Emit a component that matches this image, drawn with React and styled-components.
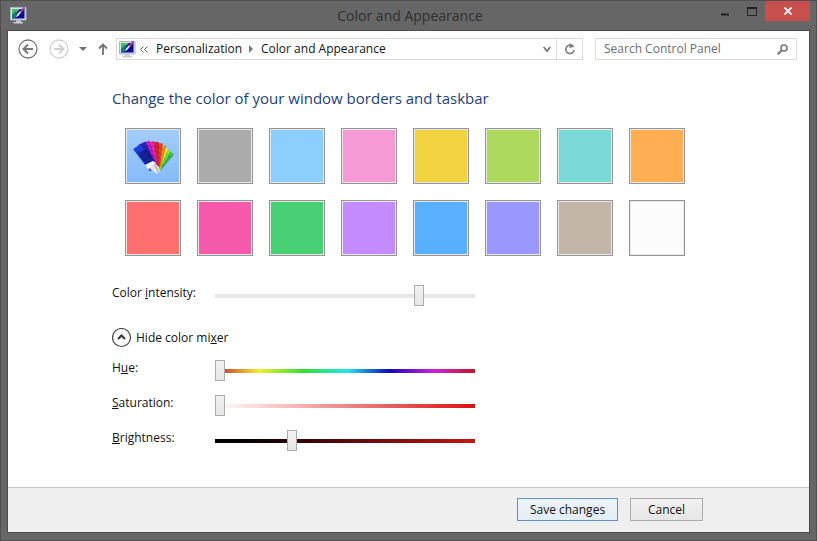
import { useState } from 'react';
import styled, { createGlobalStyle } from 'styled-components';

const SWATCHES = [
  { name: 'Automatic', color: 'linear-gradient(#a4cdfb, #84bbfb)', auto: true },
  { name: 'Gray', color: '#ababab' },
  { name: 'Sky', color: '#8ccfff' },
  { name: 'Pink', color: '#f59ad5' },
  { name: 'Yellow', color: '#f1d240' },
  { name: 'Lime', color: '#add95f' },
  { name: 'Aqua', color: '#7ad8d7' },
  { name: 'Orange', color: '#ffae51' },
  { name: 'Coral', color: '#ff6f6f' },
  { name: 'Magenta', color: '#f559a9' },
  { name: 'Green', color: '#48d075' },
  { name: 'Violet', color: '#c48aff' },
  { name: 'Blue', color: '#58b0ff' },
  { name: 'Lavender', color: '#9a98ff' },
  { name: 'Taupe', color: '#c3b5a8' },
  { name: 'White', color: '#fcfcfc' },
];

const BLADES = [
  { angle: 39, color: '#3cc43c', length: 25, width: 5 },
  { angle: 31, color: '#7fe04a', length: 25, width: 5 },
  { angle: 23, color: '#f5ec2c', length: 26, width: 5 },
  { angle: 15, color: '#f0941d', length: 28, width: 6 },
  { angle: 7, color: '#f0402a', length: 29, width: 6 },
  { angle: -1, color: '#e01d40', length: 30, width: 6 },
  { angle: -10, color: '#ee28a8', length: 31, width: 6 },
  { angle: -18, color: '#b022d8', length: 32, width: 6 },
  { angle: -26, color: '#2a22b8', length: 32, width: 7 },
  { angle: -37, color: '#1c40e0', length: 32, width: 9 },
];

const HUES =
  'linear-gradient(to right, #c8202a, #f0f030 17%, #30e030 34%, #20e8e8 51%, #1008c0 67%, #d020d8 84%, #c81428)';

const MonitorIcon = () => (
  <svg width="17" height="17" viewBox="0 0 17 17" aria-hidden="true">
    <path d="M0.5 0.5h15.500v12.500H0.500z" fill="#d9e0ec" stroke="#aab4c6" />
    <path d="M2 2h12.500v9.500H2z" fill="#0c0c8c" />
    <path d="M2 2h8L2 9.500z" fill="#42c462" />
    <path d="M2 11.500V8l4-4 1 3-2 4.500z" fill="#157c74" />
    <path d="M6 9.500l2-3 1.500 1.200L6.500 10z" fill="#fff" />
    <path d="M8.500 7L14.500 0.500" stroke="#a8478c" strokeWidth="2" />
    <path d="M8 7.500L10.500 5" stroke="#e8f2ff" strokeWidth="1.500" />
    <path d="M6 13.500h5V15h2v1.500H3.500V15H6z" fill="#c8cdd8" />
  </svg>
);

const FanIcon = () => (
  <svg width="42" height="38" viewBox="0 0 42 38" aria-hidden="true">
    {BLADES.map(({ angle, color, length, width }) => (
      <g key={angle} transform={`translate(24 35) rotate(${angle})`}>
        <rect x={-width / 2} y={-length} width={width} height={length - 4} fill={color} />
        <path
          d={`M${-width / 2} ${5 - length}h${width}M${-width / 2} ${10 - length}h${width}M${-width / 2} ${15 - length}h${width}`}
          stroke="#000"
          strokeOpacity="0.2"
        />
        <path
          d={`M${width / 2} ${-length}V-6`}
          stroke="#000"
          strokeOpacity="0.15"
        />
      </g>
    ))}
    <path d="M6 16l8-4 8 12-8 4z" fill="#080850" opacity="0.5" />
    <path d="M13 28l8-4 3 2-6 4-2 2z" fill="#fff" />
    <path d="M17 30l6-4 4 4 1 4-3 3-6-4z" fill="#dadada" />
    <path d="M20 29l5 7M23 27l3 8" stroke="#aaa" />
    <path d="M16 32l4-3 5 7" stroke="#fff" fill="none" />
  </svg>
);

const CircleArrow = ({ flip, color }) => (
  <svg width="20" height="20" viewBox="0 0 20 20" aria-hidden="true">
    <circle cx="10" cy="10" r="9" fill="none" stroke={color} strokeWidth="1.300" />
    <path
      d="M15 10H6M10 5.500L5.500 10l4.500 4.500"
      transform={flip ? 'rotate(180 10 10)' : undefined}
      fill="none"
      stroke={color}
      strokeWidth="2"
    />
  </svg>
);

const Slider = ({ label, id, initial, track }) => {
  const [value, setValue] = useState(initial);
  return (
    <SliderRow>
      <SliderLabel htmlFor={id}>{label}</SliderLabel>
      <Range
        id={id}
        type="range"
        min="0"
        max="255"
        value={value}
        $track={track}
        onChange={(e) => setValue(Number(e.target.value))}
      />
    </SliderRow>
  );
};

const App = () => {
  const [open, setOpen] = useState(true);

  return (
    <Frame>
      <GlobalStyle />
      <TitleBar>
        <MonitorIcon />
        <WindowTitle>Color and Appearance</WindowTitle>
        <WindowControls>
          <ControlButton aria-label="Minimize">
            <svg width="9" height="10" viewBox="0 0 9 10">
              <path d="M1 8.500h8" stroke="#222" strokeWidth="2" />
            </svg>
          </ControlButton>
          <ControlButton aria-label="Maximize">
            <svg width="10" height="9" viewBox="0 0 10 9">
              <path d="M0.500 1v7.500h9V1" fill="none" stroke="#222" />
              <path d="M0 1h10" stroke="#222" strokeWidth="2" />
            </svg>
          </ControlButton>
          <CloseButton aria-label="Close">
            <svg width="8" height="8" viewBox="0 0 8 8">
              <path d="M0.500 0.500l7 7M7.500 0.500l-7 7" stroke="#fff" strokeWidth="1.700" />
            </svg>
          </CloseButton>
        </WindowControls>
      </TitleBar>

      <Panel>
        <NavBar>
          <NavButtons>
            <IconButton aria-label="Back">
              <CircleArrow color="#777" />
            </IconButton>
            <IconButton aria-label="Forward">
              <CircleArrow flip color="#d0d0d0" />
            </IconButton>
            <IconButton aria-label="Recent pages">
              <svg width="8" height="4" viewBox="0 0 8 4">
                <path d="M0 0h8L4 4z" fill="#707070" />
              </svg>
            </IconButton>
            <IconButton aria-label="Up">
              <svg width="10" height="12" viewBox="0 0 10 12">
                <path d="M5 12V1.500M1 5.500l4-4 4 4" fill="none" stroke="#707070" strokeWidth="1.800" />
              </svg>
            </IconButton>
          </NavButtons>

          <AddressBar>
            <MonitorIcon />
            <svg width="8" height="7" viewBox="0 0 8 7" aria-hidden="true">
              <path d="M3.500 0.500l-3 3 3 3M7.500 0.500l-3 3 3 3" fill="none" stroke="#555" />
            </svg>
            <Crumb href="#personalization">Personalization</Crumb>
            <svg width="4" height="8" viewBox="0 0 4 8" aria-hidden="true">
              <path d="M0 0l4 4-4 4z" fill="#777" />
            </svg>
            <Crumb href="#color">Color and Appearance</Crumb>
            <DropButton aria-label="Previous locations">
              <svg width="8" height="7" viewBox="0 0 8 7">
                <path d="M0.700 1L4 5l3.300-4" fill="none" stroke="#777" strokeWidth="1.800" />
              </svg>
            </DropButton>
            <RefreshButton aria-label="Refresh">
              <svg width="12" height="12" viewBox="0 0 12 12">
                <path d="M9.500 4A4.200 4.200 0 1 0 10.200 7" fill="none" stroke="#808080" strokeWidth="1.700" />
                <path d="M5.500 0v5.500L10 3z" fill="#808080" />
              </svg>
            </RefreshButton>
          </AddressBar>

          <SearchBox>
            <SearchInput type="search" aria-label="Search Control Panel" placeholder="Search Control Panel" />
            <svg width="11" height="11" viewBox="0 0 11 11" aria-hidden="true">
              <circle cx="7" cy="4" r="3" fill="none" stroke="#777" strokeWidth="1.600" />
              <path d="M5 6L0.700 10.300" stroke="#777" strokeWidth="2.200" />
            </svg>
          </SearchBox>
        </NavBar>

        <Content>
          <Heading>Change the color of your window borders and taskbar</Heading>
          <SwatchGrid>
            {SWATCHES.map(({ name, color, auto }) => (
              <Swatch key={name} aria-label={name} $color={color}>
                {auto && <FanIcon />}
              </Swatch>
            ))}
          </SwatchGrid>

          <Slider id="intensity" initial={203} track="#e7e7e7" label={<>Color <u>i</u>ntensity:</>} />

          <MixerToggle aria-expanded={open} onClick={() => setOpen(!open)}>
            <svg width="20" height="20" viewBox="0 0 20 20" aria-hidden="true">
              <circle cx="9.500" cy="9.500" r="9" fill="none" stroke="#444" strokeWidth="1.200" />
              <path
                d="M6 11l3.500-3.500L13 11"
                transform={open ? undefined : 'rotate(180 9.500 9.500)'}
                fill="none"
                stroke="#333"
                strokeWidth="2"
              />
            </svg>
            <span>{open ? 'Hide' : 'Show'} color mi<u>x</u>er</span>
          </MixerToggle>

          {open && (
            <Mixer>
              <Slider id="hue" initial={0} track={HUES} label={<>H<u>u</u>e:</>} />
              <Slider
                id="saturation"
                initial={0}
                track="linear-gradient(to right, #fff, #e01010)"
                label={<><u>S</u>aturation:</>}
              />
              <Slider
                id="brightness"
                initial={73}
                track="linear-gradient(to right, #000 10%, #c81414)"
                label={<><u>B</u>rightness:</>}
              />
            </Mixer>
          )}
        </Content>

        <Footer>
          <PushButton $primary>Save changes</PushButton>
          <PushButton>Cancel</PushButton>
        </Footer>
      </Panel>
    </Frame>
  );
};

export default App;

const GlobalStyle = createGlobalStyle`
  * {
    box-sizing: border-box;
  }
  body {
    margin: 0;
    color: #111;
    font-family: 'Open Sans', 'Noto Sans', sans-serif;
    font-size: 12px;
    line-height: 16px;
  }
  button, input {
    margin: 0;
    padding: 0;
    border: 0;
    background: none;
    color: inherit;
    font: inherit;
  }
  svg {
    display: block;
    flex-shrink: 0;
  }
`;

const Frame = styled.div`
  display: flex;
  flex-direction: column;
  min-height: 100vh;
  padding: 0 6px 7px;
  border: 1px solid #505050;
  background: #666;
`;

const TitleBar = styled.header`
  display: grid;
  grid-template-columns: 1fr auto 1fr;
  align-items: center;
  height: 29px;
  padding-left: 3px;
`;

const WindowTitle = styled.div`
  color: #303030;
  font-size: 14px;
  line-height: 20px;
`;

const WindowControls = styled.div`
  display: flex;
  justify-content: flex-end;
  align-self: start;
`;

const ControlButton = styled.button`
  display: flex;
  align-items: center;
  justify-content: center;
  width: 27px;
  height: 20px;
`;

const CloseButton = styled(ControlButton)`
  width: 45px;
  background: #c94f4f;
`;

const Panel = styled.main`
  display: flex;
  flex: 1;
  flex-direction: column;
  border: 1px solid #4c4c4c;
  background: #fff;
`;

const NavBar = styled.nav`
  display: flex;
  padding: 7px 12px 0 10px;
`;

const NavButtons = styled.div`
  display: flex;
  align-items: center;
  justify-content: space-between;
  width: 98px;
  padding-right: 8px;
`;

const IconButton = styled.button`
  flex-shrink: 0;
`;

const AddressBar = styled.div`
  display: flex;
  flex: 1;
  align-items: center;
  height: 22px;
  padding-left: 2px;
  border: 1px solid #d9d9d9;

  > svg {
    margin-right: 4px;
  }
`;

const Crumb = styled.a`
  margin: 0 7px 0 4px;
  color: #111;
  text-decoration: none;
  white-space: nowrap;
`;

const DropButton = styled.button`
  display: flex;
  align-items: center;
  justify-content: center;
  width: 18px;
  height: 20px;
  margin-left: auto;
`;

const RefreshButton = styled(DropButton)`
  width: 26px;
  margin-left: 0;
  border-left: 1px solid #d9d9d9;
`;

const SearchBox = styled.div`
  display: flex;
  align-items: center;
  width: 202px;
  height: 22px;
  margin-left: 12px;
  padding: 0 8px;
  border: 1px solid #d9d9d9;
`;

const SearchInput = styled.input`
  flex: 1;
  min-width: 0;
  outline: none;
  appearance: none;

  &::placeholder {
    color: #6d6d6d;
  }
`;

const Content = styled.section`
  flex: 1;
  padding: 28px 104px 24px;
`;

const Heading = styled.h1`
  margin: 0;
  color: #1c3f7c;
  font-size: 15px;
  font-weight: 400;
  line-height: 20px;
`;

const SwatchGrid = styled.div`
  display: grid;
  grid-template-columns: repeat(auto-fill, 56px);
  gap: 16px;
  padding: 20px 13px 22px;
`;

const Swatch = styled.button`
  display: flex;
  align-items: center;
  justify-content: center;
  height: 56px;
  border: 1px solid #959595;
  background: ${({ $color }) => $color};
  box-shadow: inset 0 0 0 1px #e8e8e8;
`;

const SliderRow = styled.div`
  display: flex;
  align-items: center;
  height: 35px;
`;

const SliderLabel = styled.label`
  width: 103px;
  padding-bottom: 5px;
`;

const Range = styled.input`
  width: 260px;
  height: 21px;
  appearance: none;

  &::-webkit-slider-runnable-track {
    height: 4px;
    background: ${({ $track }) => $track};
  }

  &::-webkit-slider-thumb {
    width: 10px;
    height: 21px;
    margin-top: -9px;
    border: 1px solid #acacac;
    background: linear-gradient(#f2f2f2, #e6e6e6);
    appearance: none;
  }
`;

const MixerToggle = styled.button`
  display: flex;
  align-items: center;
  gap: 4px;
  margin-top: 15px;
`;

const Mixer = styled.div`
  padding-top: 5px;
`;

const Footer = styled.footer`
  display: flex;
  justify-content: flex-end;
  gap: 12px;
  padding: 10px 106px 11px;
  border-top: 1px solid #c8c8c8;
  background: #efefef;
`;

const PushButton = styled.button`
  width: ${({ $primary }) => ($primary ? '101px' : '73px')};
  height: 23px;
  border: 1px solid ${({ $primary }) => ($primary ? '#5794cb' : '#acacac')};
  background: ${({ $primary }) =>
    $primary ? 'linear-gradient(#eef4fa, #e3edf6)' : 'linear-gradient(#f1f1f1, #e6e6e6)'};
`;
